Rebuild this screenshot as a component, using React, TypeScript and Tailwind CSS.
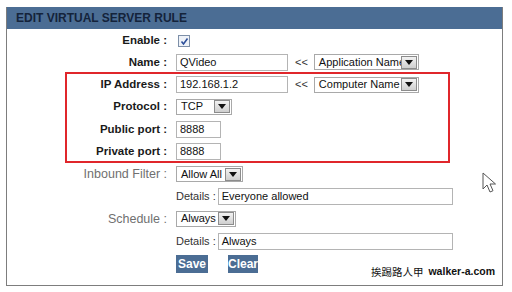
import React from 'react';

const font = { fontFamily: '"Liberation Sans", Arial, sans-serif' };

const Select: React.FC<{ value: string; width: string }> = ({ value, width }) => (
  <div className={`flex h-[16px] items-center border border-[#a9a9a9] bg-white ${width}`}>
    <span className="flex-1 overflow-hidden whitespace-nowrap pl-[4px] text-[11px] leading-none text-[#111]">{value}</span>
    <span className="mr-[1px] flex h-[13px] w-[16px] shrink-0 items-center justify-center border border-[#8c8c8c] bg-gradient-to-b from-[#f2f2f2] to-[#cfcfcf]">
      <svg width="8" height="5" viewBox="0 0 8 5">
        <path d="M0 0h8L4 5z" fill="#111" />
      </svg>
    </span>
  </div>
);

const Field: React.FC<{ value?: string; width: string }> = ({ value = '', width }) => (
  <div className={`flex h-[17px] items-center border border-[#b4b4b4] bg-white pl-[3px] text-[11px] leading-none text-[#111] ${width}`}>
    {value}
  </div>
);

const Row: React.FC<{ label?: string; kind?: 'bold' | 'dim'; children: React.ReactNode; h?: string }> = ({
  label,
  kind = 'bold',
  children,
  h = 'h-[22.4px]',
}) => (
  <div className={`flex items-center ${h}`}>
    <div
      className={`w-[160px] shrink-0 text-right ${
        kind === 'bold' ? 'text-[11.5px] font-bold text-[#1a1a1a]' : 'text-[12.5px] text-[#707070]'
      }`}
    >
      {label}
    </div>
    <div className="ml-[9px] flex items-center">{children}</div>
  </div>
);

export default function App() {
  return (
    <div className="h-[292px] w-[512px] bg-white" style={font}>
      <div className="relative ml-[6px] mt-[7px] h-[279px] w-[497px] border-x border-b border-[#7d7d7d]">
        <div className="flex h-[22px] items-center bg-[#4b6d94] pl-[9px] text-[12px] font-bold text-[#14233b]">
          EDIT VIRTUAL SERVER RULE
        </div>

        <div className="pt-[2px]">
          <Row label="Enable :" h="h-[20px]">
            <div className="ml-[2px] flex h-[12px] w-[12px] items-center justify-center border border-[#7d8fa8] bg-[#eef2f8]">
              <svg width="9" height="9" viewBox="0 0 9 9">
                <path d="M1.5 4.5L3.5 7L7.5 1.5" stroke="#2d4f9a" strokeWidth="1.6" fill="none" />
              </svg>
            </div>
          </Row>
          <Row label="Name :">
            <Field value="QVideo" width="w-[112px]" />
            <span className="ml-[7px] mr-[6px] text-[11px] text-[#333]">&lt;&lt;</span>
            <Select value="Application Name" width="w-[105px]" />
          </Row>
          <Row label="IP Address :">
            <Field value="192.168.1.2" width="w-[112px]" />
            <span className="ml-[7px] mr-[6px] text-[11px] text-[#333]">&lt;&lt;</span>
            <Select value="Computer Name" width="w-[105px]" />
          </Row>
          <Row label="Protocol :">
            <Select value="TCP" width="w-[56px]" />
          </Row>
          <Row label="Public port :">
            <Field value="8888" width="w-[45px]" />
          </Row>
          <Row label="Private port :">
            <Field value="8888" width="w-[45px]" />
          </Row>
          <Row label="Inbound Filter :" kind="dim">
            <Select value="Allow All" width="w-[67px]" />
          </Row>
          <Row>
            <span className="mr-[2px] text-[11px] text-[#333]">Details :</span>
            <Field value="Everyone allowed" width="w-[235px]" />
          </Row>
          <Row label="Schedule :" kind="dim">
            <Select value="Always" width="w-[60px]" />
          </Row>
          <Row>
            <span className="mr-[2px] text-[11px] text-[#333]">Details :</span>
            <Field value="Always" width="w-[235px]" />
          </Row>
          <Row>
            <div className="flex gap-[20px]">
              <button className="h-[18px] w-[32px] bg-[#4b6d94] text-[12px] font-bold leading-none text-white">Save</button>
              <button className="h-[18px] w-[30px] bg-[#4b6d94] text-[12px] font-bold leading-none text-white">Clear</button>
            </div>
          </Row>
        </div>

        {/* red highlight around the mapping rows */}
        <div className="absolute left-[58px] top-[65px] h-[91px] w-[385px] border-2 border-[#e0262b]" />

        {/* mouse pointer */}
        <svg className="absolute left-[475px] top-[165px]" width="14" height="22" viewBox="0 0 14 22">
          <path d="M1 1v16l4-4 3 7 3-1.3-3-6.7h5.5z" fill="#fff" stroke="#555" strokeWidth="1" strokeLinejoin="round" />
        </svg>

        <div className="absolute bottom-[5px] right-[7px] flex items-center gap-[5px] text-[10.5px] text-[#111]">
          <span style={{ fontFamily: '"Noto Sans CJK TC", "Noto Sans CJK SC", sans-serif' }}>挨踢路人甲</span>
          <span className="font-bold">walker-a.com</span>
        </div>
      </div>
    </div>
  );
}
